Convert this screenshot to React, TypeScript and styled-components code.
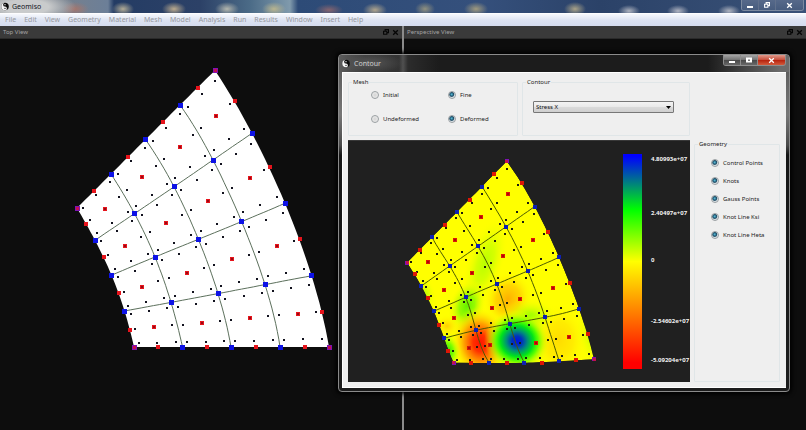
import React from 'react';
import styled, { createGlobalStyle } from 'styled-components';

type Pt = [number, number];

const GlobalStyle = createGlobalStyle`
  * { box-sizing: border-box; }
  body { margin: 0; background: #0d0d0d; font-family: "Noto Sans", "Open Sans", sans-serif; font-size: 6px; line-height: 8px; }
  button, select, input { font: inherit; }
`;

/* ---------- mesh data ---------- */

const topKnots: Pt[][] = [
  [[77, 208], [111, 174], [145.5, 139.5], [180, 105], [215, 70.5]],
  [[95, 240.3], [134.5, 213.6], [174, 186.8], [213, 160], [252, 133.3]],
  [[111.5, 275.2], [155, 257], [198.4, 239.3], [241.6, 221.6], [285, 203.3]],
  [[124.5, 311], [171, 302.4], [218, 293.6], [265, 284.6], [311.6, 275.8]],
  [[134, 347], [182.6, 347], [231, 347], [280, 347], [329, 347]],
];

const topControls: Pt[] = [
  [86, 224], [104, 257], [119, 293], [130, 329.5],
  [235, 100.5], [270, 167], [300, 239], [322, 312],
  [94, 191], [128, 156.5], [163, 122], [197.5, 87.5],
  [158, 347], [207, 347], [256, 347], [305, 347],
  [105, 208.5], [142, 177], [179.5, 146.5], [216, 116],
  [125, 246], [166, 223.3], [208, 201], [249.5, 178.3],
  [141.5, 286.5], [187, 273], [232, 259.3], [277.3, 246],
  [154, 327], [202.3, 323], [250, 318.3], [298.3, 314],
];

const contourKnots: Pt[][] = [
  [[407, 262.7], [432, 237.3], [457, 212], [482, 186.5], [506.7, 161.3]],
  [[421.3, 286], [449.7, 266], [478, 246.3], [506, 226.7], [534.7, 206.5]],
  [[433.7, 311.3], [465.7, 297.3], [496.7, 284], [527.7, 271], [559, 257.3]],
  [[444.3, 338.3], [476, 330.3], [509.7, 323.7], [545, 317.3], [579, 308.7]],
  [[453.7, 362.7], [489.3, 363], [524.3, 362.7], [559.3, 361.3], [594, 359.3]],
];

const contourControls: Pt[] = [
  [415.3, 274], [427.7, 298], [439.3, 325], [447.7, 350.7],
  [522, 183], [548, 231.5], [570, 283], [588, 334],
  [420, 250], [445, 225], [469.5, 199.5], [494, 174],
  [471.3, 362.7], [506.7, 362.7], [542, 362.5], [576, 360.3],
  [427.7, 262], [455.3, 239.7], [481.3, 217.3], [508, 194.3],
  [443.7, 290], [472, 273], [503, 255.7], [532.7, 239.7],
  [453.7, 317.7], [492, 308.3], [520.3, 299.3], [553.3, 288],
  [469, 348.3], [489.7, 345], [536.3, 342.7], [569.3, 336.7],
];

const weights = (t: number) =>
  [0, 1, 2, 3, 4].map((i) =>
    [0, 1, 2, 3, 4].reduce((w, j) => (j === i ? w : (w * (t - j)) / (i - j)), 1));

const surfacePoint = (knots: Pt[][], u: number, v: number): Pt => {
  const wu = weights(u);
  const wv = weights(v);
  let x = 0;
  let y = 0;
  knots.forEach((row, r) => row.forEach((p, c) => {
    x += wv[r] * wu[c] * p[0];
    y += wv[r] * wu[c] * p[1];
  }));
  return [x, y];
};

const samples = Array.from({ length: 33 }, (_, i) => i / 8);
const toPath = (pts: Pt[]) => 'M' + pts.map((p) => `${p[0].toFixed(1)} ${p[1].toFixed(1)}`).join('L');

const outlineOf = (k: Pt[][]) =>
  toPath([
    ...samples.map((t) => surfacePoint(k, t, 0)),
    ...samples.map((t) => surfacePoint(k, 4, t)),
    ...samples.map((t) => surfacePoint(k, 4 - t, 4)),
    ...samples.map((t) => surfacePoint(k, 0, 4 - t)),
  ]) + 'Z';

const linesOf = (k: Pt[][]) =>
  [1, 2, 3].map((n) => toPath(samples.map((t) => surfacePoint(k, n, t)))).join('') +
  [1, 2, 3].map((n) => toPath(samples.map((t) => surfacePoint(k, t, n)))).join('');

const gaussOf = (k: Pt[][]) => {
  const at = [0.113, 0.5, 0.887];
  const pts: Pt[] = [];
  for (let r = 0; r < 4; r++)
    for (let c = 0; c < 4; c++)
      at.forEach((a) => at.forEach((b) => {
        if (a !== 0.5 || b !== 0.5) pts.push(surfacePoint(k, c + a, r + b));
      }));
  return pts;
};

const Dots = ({ points, size, fill }: { points: Pt[]; size: number; fill: string }) => (
  <g fill={fill} shapeRendering="crispEdges">
    {points.map(([x, y], i) => (
      <rect key={i} x={x - size / 2} y={y - size / 2} width={size} height={size} />
    ))}
  </g>
);

const MeshMarks = ({ knots, controls, compact }: { knots: Pt[][]; controls: Pt[]; compact?: boolean }) => {
  const corners = [knots[0][0], knots[0][4], knots[4][0], knots[4][4]];
  const inner = knots.flat().filter((p) => !corners.includes(p));
  return (
    <>
      <path d={linesOf(knots)} fill="none" stroke={compact ? '#4b5a00' : '#5c705c'} strokeWidth={1} />
      <Dots points={gaussOf(knots)} size={2} fill={compact ? '#1c1c10' : '#12121e'} />
      <Dots points={controls} size={4} fill={compact ? '#dd1605' : '#e6141c'} />
      <Dots points={controls.slice(16)} size={2} fill={compact ? '#a80c08' : '#980a14'} />
      <Dots points={inner} size={compact ? 4 : 5} fill={compact ? '#0d20b4' : '#0d12e6'} />
      <Dots points={corners} size={compact ? 4 : 5} fill="#7d12b4" />
      <Dots points={corners} size={3} fill="#c4104e" />
    </>
  );
};

/* ---------- main window ---------- */

const Desktop = styled.div`
  position: relative;
  display: flex;
  flex-direction: column;
  min-height: 100vh;
  background: #0d0d0d;
  overflow: hidden;
`;

const TitleBar = styled.header`
  display: flex;
  align-items: center;
  justify-content: space-between;
  height: 13px;
  padding-left: 1px;
  background:
    radial-gradient(ellipse 50px 16px at 26px 7px, #c9cbcc 0 45%, transparent),
    radial-gradient(ellipse 14px 7px at 75px 9px, #a3766e, transparent),
    radial-gradient(ellipse 11px 7px at 123px 9px, #b2ac96, transparent),
    radial-gradient(ellipse 12px 7px at 174px 9px, #bcab8e, transparent),
    radial-gradient(ellipse 12px 7px at 227px 9px, #b4b7ae, transparent),
    radial-gradient(ellipse 12px 7px at 274px 9px, #b9b58f, transparent),
    radial-gradient(ellipse 14px 6px at 329px 10px, #85646f, transparent),
    radial-gradient(ellipse 12px 7px at 375px 10px, #b0a58d, transparent),
    radial-gradient(ellipse 10px 7px at 425px 9px, #91917f, transparent),
    radial-gradient(ellipse 12px 7px at 476px 9px, #a09a7e, transparent),
    radial-gradient(ellipse 11px 7px at 575px 9px, #aaa388, transparent),
    radial-gradient(ellipse 11px 6px at 629px 11px, #aeb3bf, transparent),
    radial-gradient(ellipse 11px 6px at 678px 11px, #b1b5c2, transparent),
    radial-gradient(ellipse 11px 6px at 729px 11px, #aeb3bf, transparent),
    linear-gradient(90deg, #8e9296 0, #77808c 60px, #6c7f98 108px, #243c64 114px, #2c4167 200px, #4b6b87 250px, #809aac 290px, #2d4b77 298px, #35507c 480px, #2b4268 600px, #3a5278 806px);
`;

const Brand = styled.h1<{ $light?: boolean }>`
  display: flex;
  align-items: center;
  gap: ${(p) => (p.$light ? 4 : 3)}px;
  margin: 0;
  font-size: 7px;
  font-weight: 400;
  line-height: 12px;
  color: ${(p) => (p.$light ? '#d0d0d0' : '#10141c')};
`;

const Controls = styled.div<{ $dialog?: boolean }>`
  display: flex;
  align-self: flex-start;
  height: 11px;
  margin-right: ${(p) => (p.$dialog ? 0 : 2)}px;
  border: 1px solid ${(p) => (p.$dialog ? '#8d8d8d' : '#7c8aa0')};
  border-top: 0;
  border-radius: 0 0 3px 3px;
  overflow: hidden;
`;

const ControlButton = styled.button<{ $kind: 'plain' | 'grey' | 'red'; $wide?: boolean }>`
  display: flex;
  align-items: center;
  justify-content: center;
  width: ${(p) => (p.$wide ? 27 : 17)}px;
  padding: 0;
  border: 0;
  border-right: 1px solid ${(p) => (p.$kind === 'plain' ? '#60708c' : '#8d8d8d')};
  color: #fff;
  background: ${(p) =>
    p.$kind === 'red'
      ? 'linear-gradient(#e09a8c, #c95340 45%, #b5200c 50%, #d35b3c)'
      : p.$kind === 'grey'
        ? 'linear-gradient(#a5a5a5, #777 45%, #484848 50%, #686868)'
        : 'linear-gradient(#56698a, #475c7e)'};
  &:last-child { border-right: 0; }
`;

const MenuBar = styled.nav`
  display: flex;
  align-items: center;
  gap: 8px;
  height: 13px;
  padding: 0 5px;
  border-top: 1px solid #fdfdfe;
  background: linear-gradient(#f6f8fd, #dde3f2 50%, #d5dcef);
`;

const MenuItem = styled.button`
  padding: 0;
  border: 0;
  background: none;
  color: #96989e;
  font-size: 7px;
  line-height: 10px;
`;

const Views = styled.main`
  display: grid;
  grid-template-columns: calc(50% - 1px) 1fr;
  flex: 1;
`;

const View = styled.section`
  display: flex;
  flex-direction: column;
  min-width: 0;
  & + & { border-left: 2px solid #8b8b8b; }
`;

const ViewHeader = styled.div`
  display: flex;
  align-items: center;
  justify-content: space-between;
  height: 13px;
  padding: 0 3px;
  border-bottom: 1px solid #2a2a2a;
  background: #3a3a3a;
  color: #a4a4a4;
`;

const ViewName = styled.h2`
  margin: 0;
  font-size: 6px;
  font-weight: 400;
`;

const ViewButtons = styled.div`
  display: flex;
  gap: 3px;
`;

const ViewButton = styled.button`
  display: flex;
  padding: 0;
  border: 0;
  background: none;
  color: #050505;
`;

const Drawing = styled.svg`
  display: block;
  flex: 1;
  width: 100%;
  min-width: 0;
  min-height: 0;
`;

/* ---------- contour dialog ---------- */

const Dialog = styled.section`
  position: absolute;
  top: 54px;
  left: 338px;
  right: 16px;
  display: flex;
  flex-direction: column;
  padding: 0 3px 3px;
  border: 1px solid #8b8b8b;
  border-radius: 4px;
  background: linear-gradient(#555 0, #777 60px, #4a4a4a 90px, #161616 100px, #1c1c1c);
  box-shadow: 0 0 4px 2px #000;
`;

const DialogBar = styled.header`
  display: flex;
  align-items: center;
  justify-content: space-between;
  height: 17px;
  margin: 0 -3px;
  padding: 0 3px 0 3px;
  border-radius: 3px 3px 0 0;
  background:
    radial-gradient(ellipse 34px 10px at 30px 8px, #555, transparent),
    linear-gradient(90deg, #5c5c5c 0, #3a3a3a 26px, #333 60px, #505050 64px, #2c2c2c 69px, #1c1c1c 100px, #1c1c1c 82%, #6b6b6b 98%);
`;

const DialogBody = styled.form`
  display: grid;
  grid-template-columns: 170fr 168fr 86px;
  grid-template-rows: 58px 242px;
  gap: 4px;
  padding: 5px 6px 5px 5px;
  border: 1px solid #fff;
  border-right: 0;
  background: #efefef;
  color: #1c1c1c;
`;

const Group = styled.fieldset<{ $last?: boolean }>`
  min-width: 0;
  margin: 0;
  padding: 0;
  border: 1px solid #e0e6e8;
  border-radius: 1px;
  grid-column: ${(p) => (p.$last ? 3 : 'auto')};
`;

const GroupName = styled.legend`
  margin-left: 3px;
  padding: 0 1px;
  line-height: 8px;
`;

const MeshOptions = styled.div`
  display: grid;
  grid-template-columns: 77px 1fr;
  row-gap: 16px;
  padding: 5px 0 0 22px;
`;

const GeometryOptions = styled.div`
  display: grid;
  row-gap: 10px;
  padding: 11px 0 0 16px;
`;

const Option = styled.label`
  display: flex;
  align-items: center;
  gap: 4px;
  height: 8px;
  white-space: nowrap;
`;

const Radio = styled.input`
  appearance: none;
  width: 8px;
  height: 8px;
  margin: 0;
  border: 1px solid #9a9fa2;
  border-radius: 50%;
  background: radial-gradient(circle, #d4d4d4, #f4f4f4);
  &:checked { background: radial-gradient(circle at 45% 40%, #5fc0dc 0, #154a66 2px, #244e66 2px, #dce4e8 3px); }
`;

const Picker = styled.div`
  display: grid;
  position: relative;
  margin: 15px 15px 0 10px;
`;

const Select = styled.select`
  appearance: none;
  width: 100%;
  height: 12px;
  padding: 0 10px 0 2px;
  border: 1px solid #777;
  border-radius: 1px;
  background: linear-gradient(#f3f3f3, #e9e9e9 48%, #dadada 52%, #cfcfcf);
  color: #111;
  line-height: 9px;
`;

const Arrow = styled.svg`
  position: absolute;
  top: 5px;
  right: 3px;
  pointer-events: none;
`;

const Canvas = styled.div`
  grid-column: 1 / 3;
  display: flex;
  overflow: hidden;
  border-top: 1px solid #383838;
  background: #202020;
`;

const Scale = styled.div`
  display: flex;
  flex: none;
  gap: 9px;
  width: 67px;
  padding-top: 13px;
`;

const ScaleBar = styled.div`
  flex: none;
  width: 19px;
  height: 215px;
  background: linear-gradient(#00f 1%, #0f0 26%, #ff0 50%, #f00 97%);
`;

const ScaleLabels = styled.div`
  display: grid;
  grid-template-rows: 54px 47px 61px 39px 10px;
  color: #f2f2f2;
  font-weight: 700;
  line-height: 10px;
`;

/* ---------- icons ---------- */

const Logo = () => (
  <svg width="8" height="9" viewBox="0 0 16 16" aria-hidden="true">
    <circle cx="8" cy="8" r="7.5" fill="#0a0a0a" />
    <path d="M8 .5a7.5 7.5 0 0 0 0 15 3.75 3.75 0 0 0 0-7.5A3.75 3.75 0 0 1 8 .5Z" fill="#f5f5f5" />
    <circle cx="8" cy="4.3" r="1.4" fill="#f5f5f5" />
    <circle cx="8" cy="11.7" r="1.4" fill="#0a0a0a" />
  </svg>
);

const MinimizeIcon = () => (
  <svg width="8" height="8" viewBox="0 0 8 8" aria-hidden="true">
    <path d="M1 5h6v2H1z" fill="currentColor" />
  </svg>
);

const MaximizeIcon = () => (
  <svg width="8" height="8" viewBox="0 0 8 8" aria-hidden="true">
    <path d="M1 1.500h6v5H1zM3 3.500v1.200h2V3.500z" fill="currentColor" fillRule="evenodd" />
  </svg>
);

const RestoreIcon = () => (
  <svg width="6" height="6" viewBox="0 0 7 7" aria-hidden="true">
    <path d="M2.500 2V.7h4v3.500H5M.7 2.700h3.800v3.500H.7z" fill="none" stroke="currentColor" strokeWidth="1.300" />
  </svg>
);

const CloseIcon = () => (
  <svg width="7" height="7" viewBox="0 0 7 7" aria-hidden="true">
    <path d="M1.200 1.200l4.600 4.600M5.800 1.200L1.200 5.800" stroke="currentColor" strokeWidth="1.300" />
  </svg>
);

/* ---------- pieces ---------- */

const menus = ['File', 'Edit', 'View', 'Geometry', 'Material', 'Mesh', 'Model', 'Analysis', 'Run', 'Results', 'Window', 'Insert', 'Help'];
const layers = ['Control Points', 'Knots', 'Gauss Points', 'Knot Line Ksi', 'Knot Line Heta'];
const ticks = ['4.80993e+07', '2.40497e+07', '0', '-2.54602e+07', '-5.09204e+07'];

const Pane = ({ title, children }: { title: string; children?: React.ReactNode }) => (
  <View>
    <ViewHeader>
      <ViewName>{title}</ViewName>
      <ViewButtons>
        <ViewButton aria-label={`Float ${title}`}><RestoreIcon /></ViewButton>
        <ViewButton aria-label={`Close ${title}`}><CloseIcon /></ViewButton>
      </ViewButtons>
    </ViewHeader>
    {children}
  </View>
);

const RadioOption = ({ name, label, checked }: { name: string; label: string; checked?: boolean }) => (
  <Option>
    <Radio type="radio" name={name} defaultChecked={checked} />
    {label}
  </Option>
);

type Stop = [number, string, number];
const blobs: { id: string; cx: number; cy: number; rx: number; ry: number; turn: number; stops: Stop[] }[] = [
  { id: 'ridge', cx: 485, cy: 263, rx: 19, ry: 48, turn: 18, stops: [[0, '#b0ff00', 0.9], [0.4, '#c0ff00', 0.65], [1, '#ff0', 0]] },
  { id: 'west', cx: 426, cy: 293, rx: 10, ry: 18, turn: -20, stops: [[0, '#b8ff00', 0.8], [1, '#ff0', 0]] },
  { id: 'leaf', cx: 467, cy: 306, rx: 18, ry: 27, turn: 20, stops: [[0, '#64f000', 1], [0.4, '#84fa00', 0.85], [1, '#ff0', 0]] },
  { id: 'amber', cx: 508, cy: 299, rx: 24, ry: 28, turn: 20, stops: [[0, '#ffb000', 1], [0.5, '#ffc400', 0.7], [1, '#ff0', 0]] },
  { id: 'rim', cx: 447, cy: 326, rx: 14, ry: 12, turn: 0, stops: [[0, '#ffc800', 0.9], [1, '#ff0', 0]] },
  { id: 'east', cx: 559, cy: 340, rx: 28, ry: 36, turn: 0, stops: [[0, '#ffdc00', 1], [0.5, '#ffe400', 0.7], [1, '#ff0', 0]] },
  { id: 'edge', cx: 592, cy: 337, rx: 15, ry: 32, turn: -12, stops: [[0, '#b4ff00', 0.9], [1, '#ff0', 0]] },
  { id: 'glow', cx: 480, cy: 343, rx: 29, ry: 36, turn: -8, stops: [[0, '#ff1400', 1], [0.24, '#ff3000', 1], [0.55, '#ff9000', 0.85], [1, '#ff0', 0]] },
  { id: 'corner', cx: 448, cy: 350, rx: 13, ry: 19, turn: -15, stops: [[0, '#30e800', 1], [0.4, '#70ff00', 0.9], [1, '#ff0', 0]] },
  { id: 'halo', cx: 530, cy: 316, rx: 28, ry: 18, turn: 0, stops: [[0, '#80ff00', 0.9], [1, '#ff0', 0]] },
  { id: 'well', cx: 517, cy: 341, rx: 33, ry: 31, turn: 10, stops: [[0, '#0010e0', 1], [0.15, '#0030c0', 1], [0.32, '#008f78', 1], [0.5, '#00e41a', 1], [0.64, '#50ff00', 0.95], [0.82, '#b8ff00', 0.5], [1, '#ff0', 0]] },
];

const ContourDrawing = () => (
  <Drawing role="img" aria-label="Stress contour">
    <defs>
      <clipPath id="plate"><path d={outlineOf(contourKnots)} /></clipPath>
      {blobs.map((b) => (
        <radialGradient key={b.id} id={b.id}>
          {b.stops.map(([o, c, a]) => <stop key={o} offset={o} stopColor={c} stopOpacity={a} />)}
        </radialGradient>
      ))}
    </defs>
    <g transform="translate(-348 -141)">
      <g clipPath="url(#plate)">
        <path d={outlineOf(contourKnots)} fill="#ff0" />
        {blobs.map((b) => (
          <ellipse key={b.id} cx={b.cx} cy={b.cy} rx={b.rx} ry={b.ry} fill={`url(#${b.id})`} transform={`rotate(${b.turn} ${b.cx} ${b.cy})`} />
        ))}
      </g>
      <MeshMarks knots={contourKnots} controls={contourControls} compact />
    </g>
  </Drawing>
);

const ContourDialog = () => (
  <Dialog role="dialog" aria-label="Contour">
    <DialogBar>
      <Brand as="h2" $light><Logo />Contour</Brand>
      <Controls $dialog>
        <ControlButton $kind="grey" aria-label="Minimize"><MinimizeIcon /></ControlButton>
        <ControlButton $kind="grey" aria-label="Maximize"><MaximizeIcon /></ControlButton>
        <ControlButton $kind="red" $wide aria-label="Close"><CloseIcon /></ControlButton>
      </Controls>
    </DialogBar>
    <DialogBody>
      <Group>
        <GroupName>Mesh</GroupName>
        <MeshOptions>
          <RadioOption name="resolution" label="Initial" />
          <RadioOption name="resolution" label="Fine" checked />
          <RadioOption name="shape" label="Undeformed" />
          <RadioOption name="shape" label="Deformed" checked />
        </MeshOptions>
      </Group>
      <Group>
        <GroupName>Contour</GroupName>
        <Picker>
          <Select aria-label="Contour" defaultValue="Stress X">
            <option>Stress X</option>
          </Select>
          <Arrow width="5" height="3" viewBox="0 0 5 3" aria-hidden="true"><path d="M0 0h5L2.500 3z" /></Arrow>
        </Picker>
      </Group>
      <Canvas>
        <ContourDrawing />
        <Scale>
          <ScaleBar />
          <ScaleLabels>
            {ticks.map((t) => <span key={t}>{t}</span>)}
          </ScaleLabels>
        </Scale>
      </Canvas>
      <Group $last>
        <GroupName>Geometry</GroupName>
        <GeometryOptions>
          {layers.map((l) => <RadioOption key={l} name={l} label={l} checked />)}
        </GeometryOptions>
      </Group>
    </DialogBody>
  </Dialog>
);

export default function App() {
  return (
    <>
      <GlobalStyle />
      <Desktop>
        <TitleBar>
          <Brand><Logo />Geomiso</Brand>
          <Controls>
            <ControlButton $kind="plain" aria-label="Minimize"><MinimizeIcon /></ControlButton>
            <ControlButton $kind="plain" aria-label="Restore"><RestoreIcon /></ControlButton>
            <ControlButton $kind="plain" $wide aria-label="Close"><CloseIcon /></ControlButton>
          </Controls>
        </TitleBar>
        <MenuBar>
          {menus.map((m) => <MenuItem key={m}>{m}</MenuItem>)}
        </MenuBar>
        <Views>
          <Pane title="Top View">
            <Drawing role="img" aria-label="Mesh seen from the top">
              <g transform="translate(0 -39)">
                <path d={outlineOf(topKnots)} fill="#fff" />
                <MeshMarks knots={topKnots} controls={topControls} />
              </g>
            </Drawing>
          </Pane>
          <Pane title="Perspective View" />
        </Views>
        <ContourDialog />
      </Desktop>
    </>
  );
}
